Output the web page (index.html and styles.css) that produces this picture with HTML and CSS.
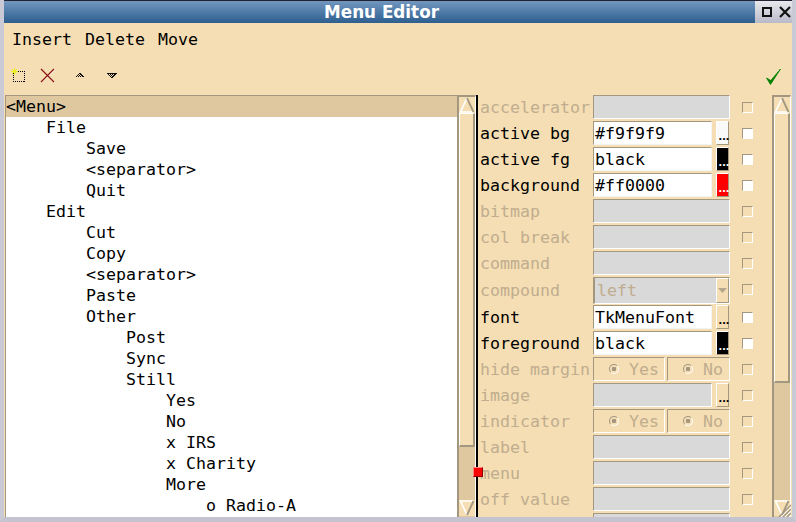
FILE: index.html
```html
<!DOCTYPE html>
<html lang="en">
<head>
    <meta charset="UTF-8">
    <title>Menu Editor</title>
    <link rel="stylesheet" href="styles.css">
</head>
<body>

<div class="window">
    <div class="titlebar">
        <div class="title">Menu Editor</div>
        <div class="wm-buttons">
            <svg width="12" height="12" viewBox="0 0 12 12"><rect x="2" y="2" width="8" height="8" fill="none" stroke="#111" stroke-width="2"/></svg>
            <svg width="14" height="14" viewBox="0 0 14 14"><path d="M2 2L12 12M12 2L2 12" stroke="#111" stroke-width="2.2"/></svg>
        </div>
    </div>

    <div class="content">
        <div class="menubar">
            <span>Insert</span>
            <span>Delete</span>
            <span>Move</span>
        </div>

        <div class="toolbar">
            <svg class="tool-new" width="15" height="15" viewBox="0 0 15 15" shape-rendering="crispEdges">
                <rect x="2.5" y="3.5" width="11" height="10" fill="none" stroke="#000" stroke-dasharray="1 1"/>
                <path d="M0 3.5H7M3.5 0V7M1 1L6 6M6 1L1 6" stroke="#ecec20"/>
            </svg>
            <svg class="tool-del" width="15" height="15" viewBox="0 0 15 15"><path d="M1 2L14 14M14 2L1 14" stroke="#fff" stroke-width="1" transform="translate(0.7 0)"/><path d="M1 1L14 14M14 1L1 14" stroke="#8b1010" stroke-width="1.2"/></svg>
            <svg class="tool-up" width="8" height="5" viewBox="0 0 8 5" shape-rendering="crispEdges">
                <path d="M3 0H5V1H3ZM2 1H3V2H2ZM4 1H5V2H4ZM5 1H6V2H5ZM1 2H2V3H1ZM3 2H4V3H3ZM5 2H6V3H5ZM6 2H7V3H6ZM0 3H1V4H0ZM2 3H3V4H2ZM4 3H5V4H4ZM6 3H8V4H6Z" fill="#111"/>
            </svg>
            <svg class="tool-down" width="10" height="6" viewBox="0 0 10 6" shape-rendering="crispEdges">
                <path d="M0 0H10V1H0ZM1 1H2V2H1ZM3 1H4V2H3ZM5 1H6V2H5ZM7 1H8V2H7ZM8 1H9V2H8ZM2 2H3V3H2ZM4 2H5V3H4ZM6 2H8V3H6ZM3 3H4V4H3ZM5 3H7V4H5ZM4 4H6V5H4Z" fill="#111"/>
            </svg>
            <svg class="tool-ok" width="17" height="18" viewBox="0 0 17 18"><path d="M1.5 10L5.5 16.5L15.5 1L5.8 12.5Z" fill="#008000" stroke="#008000" stroke-width="0.8"/></svg>
        </div>

        <div class="panes">
            <div class="tree">
                <div class="tree-row selected">&lt;Menu&gt;</div>
                <div class="tree-row lvl1">File</div>
                <div class="tree-row lvl2">Save</div>
                <div class="tree-row lvl2">&lt;separator&gt;</div>
                <div class="tree-row lvl2">Quit</div>
                <div class="tree-row lvl1">Edit</div>
                <div class="tree-row lvl2">Cut</div>
                <div class="tree-row lvl2">Copy</div>
                <div class="tree-row lvl2">&lt;separator&gt;</div>
                <div class="tree-row lvl2">Paste</div>
                <div class="tree-row lvl2">Other</div>
                <div class="tree-row lvl3">Post</div>
                <div class="tree-row lvl3">Sync</div>
                <div class="tree-row lvl3">Still</div>
                <div class="tree-row lvl4">Yes</div>
                <div class="tree-row lvl4">No</div>
                <div class="tree-row lvl4">x IRS</div>
                <div class="tree-row lvl4">x Charity</div>
                <div class="tree-row lvl4">More</div>
                <div class="tree-row lvl5">o Radio-A</div>
            </div>

            <div class="scrollbar tree-scroll">
                <div class="arrow"><svg width="16" height="16" viewBox="0 0 16 16"><path d="M8 1L1.5 15H14.5" fill="none" stroke="#fff" stroke-width="1.6"/><path d="M8 1L14.5 15" stroke="#a39780" stroke-width="1.8"/></svg></div>
                <div class="thumb"></div>
                <div class="arrow-down"><svg width="16" height="16" viewBox="0 0 16 16"><path d="M14.5 1H1.5L8 15" fill="none" stroke="#fff" stroke-width="1.6"/><path d="M14.5 1L8 15" stroke="#a39780" stroke-width="1.8"/></svg></div>
            </div>

            <div class="sash"><div class="sash-handle"></div></div>

            <div class="props">
                <div class="prop off"><label>accelerator</label><div class="field wide"></div><i class="check"></i></div>
                <div class="prop"><label>active bg</label><div class="field">#f9f9f9</div><div class="dots light">...</div><i class="check"></i></div>
                <div class="prop"><label>active fg</label><div class="field">black</div><div class="dots black">...</div><i class="check"></i></div>
                <div class="prop"><label>background</label><div class="field">#ff0000</div><div class="dots red">...</div><i class="check"></i></div>
                <div class="prop off"><label>bitmap</label><div class="field wide"></div><i class="check"></i></div>
                <div class="prop off"><label>col break</label><div class="field wide"></div><i class="check"></i></div>
                <div class="prop off"><label>command</label><div class="field wide"></div><i class="check"></i></div>
                <div class="prop off combo-row"><label>compound</label>
                    <div class="combo"><div class="combo-text">left</div><div class="combo-btn"><svg width="9" height="5" viewBox="0 0 9 5"><path d="M0 0H9L4.5 5Z" fill="#b5a68c"/></svg></div></div>
                    <i class="check"></i></div>
                <div class="prop"><label>font</label><div class="field">TkMenuFont</div><div class="dots">...</div><i class="check"></i></div>
                <div class="prop"><label>foreground</label><div class="field">black</div><div class="dots black">...</div><i class="check"></i></div>
                <div class="prop off"><label>hide margin</label><div class="radios"><div class="radio"><b></b>Yes</div><div class="radio"><b></b>No</div></div><i class="check"></i></div>
                <div class="prop off"><label>image</label><div class="field"></div><div class="dots">...</div><i class="check"></i></div>
                <div class="prop off"><label>indicator</label><div class="radios"><div class="radio"><b></b>Yes</div><div class="radio"><b></b>No</div></div><i class="check"></i></div>
                <div class="prop off"><label>label</label><div class="field wide"></div><i class="check"></i></div>
                <div class="prop off"><label>menu</label><div class="field wide"></div><i class="check"></i></div>
                <div class="prop off"><label>off value</label><div class="field wide"></div><i class="check"></i></div>
                <div class="prop off"><label>on value</label><div class="field wide"></div><i class="check"></i></div>
            </div>

            <div class="scrollbar props-scroll">
                <div class="arrow"><svg width="16" height="16" viewBox="0 0 16 16"><path d="M8 1L1.5 15H14.5" fill="none" stroke="#fff" stroke-width="1.6"/><path d="M8 1L14.5 15" stroke="#a39780" stroke-width="1.8"/></svg></div>
                <div class="thumb"></div>
                <div class="arrow-down"><svg width="16" height="16" viewBox="0 0 16 16"><path d="M14.5 1H1.5L8 15" fill="none" stroke="#fff" stroke-width="1.6"/><path d="M14.5 1L8 15" stroke="#a39780" stroke-width="1.8"/></svg></div>
                <svg class="grip" width="14" height="14" viewBox="0 0 14 14"><path d="M14 2L2 14M14 6L6 14M14 10L10 14" stroke="#a39780" stroke-width="1.4"/><path d="M14 4L4 14M14 8L8 14M14 12L12 14" stroke="#fff"/></svg>
            </div>
        </div>
    </div>
</div>

</body>
</html>
```

FILE: styles.css
```css
html, body {
    margin: 0;
    padding: 0;
    height: 100%;
    overflow: hidden;
}
body {
    font-family: "DejaVu Sans Mono", monospace;
    font-size: 16.6px;
    color: #000;
    background-color: #f5deb3;
}
.window {
    width: 796px;
    height: 522px;
    display: flex;
    flex-direction: column;
    box-sizing: border-box;
    border-left: 4px solid #c9cad6;
    border-right: 4px solid #c9cad6;
    border-bottom: 5px solid #c3c4d0;
    overflow: hidden;
}
.titlebar {
    flex: 0 0 23px;
    margin: 0 -4px;
    display: flex;
    background: linear-gradient(#7297bf, #2d5e8f);
    border-top: 1px solid #223;
    box-sizing: border-box;
    border-radius: 5px 5px 0 0;
}
.title {
    flex: 1;
    padding-left: 8px;
    text-align: center;
    font-family: "DejaVu Sans", sans-serif;
    font-weight: bold;
    font-size: 16.8px;
    line-height: 22px;
    color: #fff;
}
.wm-buttons {
    flex: 0 0 41px;
    display: flex;
    gap: 5px;
    align-items: center;
    box-sizing: border-box;
    padding-left: 6px;
    background: linear-gradient(#e8e8ee, #b9bac8);
}
.content {
    flex: 1;
    display: flex;
    flex-direction: column;
    min-height: 0;
}
.menubar {
    height: 34px;
    padding: 6px 0 0 8px;
    box-sizing: border-box;
    display: flex;
    gap: 13px;
    line-height: 21px;
}
.toolbar {
    height: 38px;
    display: flex;
    align-items: center;
}
.tool-new {
    margin-left: 7px;
    margin-top: -1px;
}
.tool-del {
    margin-left: 14px;
    margin-top: -1px;
}
.tool-up {
    margin-left: 21px;
    margin-top: -1px;
}
.tool-down {
    margin-left: 23px;
    margin-top: 0;
}
.tool-ok {
    margin-left: auto;
    margin-right: 10px;
    margin-top: 2px;
}
.panes {
    flex: 1;
    min-height: 0;
    display: flex;
}
.tree {
    flex: 0 0 452px;
    margin-left: 1px;
    background-color: #fff;
    border-top: 1px solid #a39780;
    border-left: 1px solid #a39780;
    box-sizing: border-box;
    overflow: hidden;
}
.tree-row {
    height: 21px;
    line-height: 21px;
    white-space: pre;
}
.tree-row.selected {
    background-color: #dfc8a0;
}
.lvl1 { padding-left: 40px; }
.lvl2 { padding-left: 80px; }
.lvl3 { padding-left: 120px; }
.lvl4 { padding-left: 160px; }
.lvl5 { padding-left: 200px; }
.scrollbar {
    flex: 0 0 19px;
    box-sizing: border-box;
    background-color: #dfc8a0;
    border-top: 2px solid #a39780;
    border-left: 2px solid #a39780;
    border-right: 1px solid #fff;
    position: relative;
}
.arrow {
    height: 16px;
    background-color: #f5deb3;
}
.arrow svg, .arrow-down svg {
    display: block;
}
.arrow-down {
    position: absolute;
    left: 0;
    right: 0;
    bottom: 1px;
    height: 16px;
    background-color: #f5deb3;
}
.thumb {
    background-color: #f5deb3;
    border: 2px solid #a39780;
    border-top: 1px solid #fff;
    border-left: 1px solid #fff;
    box-sizing: border-box;
}
.tree-scroll .thumb { height: 334px; }
.props-scroll .thumb { height: 270px; }
.props-scroll {
    margin-right: 1px;
}
.grip {
    position: absolute;
    right: -1px;
    bottom: 0;
}
.sash {
    flex: 0 0 2px;
    background-color: #000;
    position: relative;
    z-index: 2;
}
.sash-handle {
    position: absolute;
    left: -3px;
    top: 372px;
    width: 10px;
    height: 10px;
    background-color: #f00;
    border-top: 1px solid #ff8080;
    border-left: 1px solid #ff8080;
    border-right: 1px solid #800;
    border-bottom: 1px solid #800;
    box-sizing: border-box;
}
.props {
    flex: 1;
    min-width: 0;
    padding-left: 2px;
    overflow: hidden;
}
.prop {
    height: 26px;
    display: flex;
    align-items: flex-start;
}
.prop.combo-row {
    height: 28px;
}
.prop label {
    flex: 0 0 113px;
    line-height: 25px;
    white-space: pre;
}
.prop.combo-row label {
    line-height: 27px;
}
.prop.off label {
    color: #c0ad8f;
}
.field {
    flex: 0 0 119px;
    height: 24px;
    line-height: 23px;
    padding-left: 1px;
    box-sizing: border-box;
    background-color: #fff;
    border: 1px solid #f4f4f4;
    border-top-color: #a39780;
    border-left-color: #a39780;
    white-space: pre;
}
.off .field {
    background-color: #d9d9d9;
    border-right-color: #fff;
    border-bottom-color: #fff;
}
.field.wide {
    flex-basis: 137px;
}
.dots {
    flex: 0 0 13px;
    height: 24px;
    margin-left: 4px;
    box-sizing: border-box;
    border: 1px solid #a39780;
    border-top-color: #fff;
    border-left-color: #fff;
    display: flex;
    align-items: flex-end;
    justify-content: center;
    font-size: 11px;
    font-weight: bold;
    line-height: 14px;
    letter-spacing: -3px;
}
.dots.light {
    background-color: #f9f9f9;
}
.dots.black {
    background-color: #000;
    color: #fff;
}
.dots.red {
    background-color: #f00;
    color: #fff;
}
.check {
    flex: 0 0 11px;
    height: 11px;
    margin: 7px 19px 0 auto;
    box-sizing: border-box;
    background-color: #fff;
    border: 1px solid #fff;
    border-top-color: #a39780;
    border-left-color: #a39780;
}
.off .check {
    background-color: transparent;
}
.combo {
    flex: 0 0 137px;
    height: 27px;
    display: flex;
    box-sizing: border-box;
    border: 1px solid #fff;
    border-top-color: #a39780;
    border-left: 2px solid #a39780;
}
.combo-text {
    flex: 1;
    background-color: #d9d9d9;
    color: #c0ad8f;
    line-height: 25px;
    padding-left: 2px;
}
.combo-btn {
    flex: 0 0 11px;
    display: flex;
    align-items: center;
    justify-content: center;
    border: 1px solid #a39780;
    border-top-color: #fff;
    border-left-color: #fff;
}
.radios {
    flex: 0 0 137px;
    display: flex;
    gap: 2px;
    height: 24px;
}
.radio {
    flex: 1 1 0;
    box-sizing: border-box;
    padding-left: 15px;
    border: 1px solid #fff;
    border-top-color: #a39780;
    border-left-color: #a39780;
    color: #c0ad8f;
    display: flex;
    align-items: center;
    gap: 10px;
    line-height: 23px;
}
.radio:first-child {
    flex: 0 0 72px;
}
.radio b {
    flex: 0 0 10px;
    height: 10px;
    border-radius: 50%;
    box-sizing: border-box;
    border: 1px solid #fff;
    border-top-color: #a39780;
    border-left-color: #a39780;
    background: radial-gradient(#a39780 2px, transparent 2.5px);
}
```
